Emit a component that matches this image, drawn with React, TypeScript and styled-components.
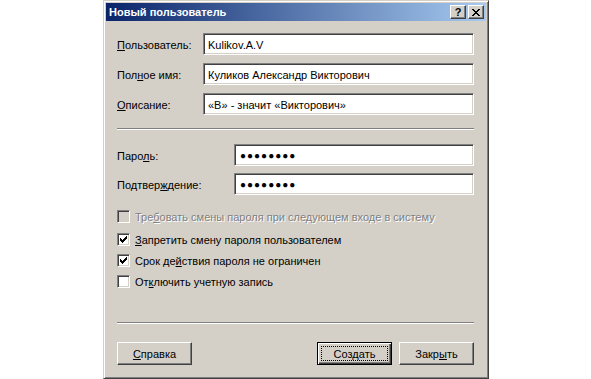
import React from 'react';
import styled, { createGlobalStyle, css } from 'styled-components';

const GlobalStyle = createGlobalStyle`
  html, body {
    margin: 0;
    padding: 0;
    background: #fff;
  }
  body {
    font-family: "Liberation Sans", Arial, sans-serif;
    font-size: 11px;
    color: #000;
  }
`;

const Page = styled.div`
  width: 591px;
  height: 379px;
  display: flex;
  padding-left: 103px;
  box-sizing: border-box;
`;

const Window = styled.div`
  width: 386px;
  height: 379px;
  box-sizing: border-box;
  background: #d4d0c8;
  border: 1px solid;
  border-color: #d4d0c8 #404040 #404040 #d4d0c8;
  box-shadow: inset 1px 1px #fff, inset -1px -1px #808080;
  padding: 2px;
  display: flex;
  flex-direction: column;
`;

const TitleBar = styled.div`
  height: 18px;
  display: flex;
  align-items: center;
  padding: 0 2px 0 3px;
  background: linear-gradient(to right, #0a246a, #a6caf0);
`;

const Title = styled.span`
  flex: 1;
  color: #fff;
  font-weight: bold;
  font-size: 11px;
`;

const CaptionButtons = styled.div`
  display: flex;
  gap: 2px;
`;

const CaptionButton = styled.div`
  width: 16px;
  height: 14px;
  box-sizing: border-box;
  background: #d4d0c8;
  border: 1px solid;
  border-color: #fff #404040 #404040 #fff;
  box-shadow: inset -1px -1px #808080;
  display: flex;
  align-items: center;
  justify-content: center;
  font-weight: bold;
  font-size: 11px;
  line-height: 1;
`;

const Body = styled.div`
  flex: 1;
  display: flex;
  flex-direction: column;
  padding: 12px 12px 0 11px;
`;

const FieldGrid = styled.div<{ $labelWidth: number; $gap: number }>`
  display: grid;
  grid-template-columns: ${p => p.$labelWidth}px 1fr;
  row-gap: ${p => p.$gap}px;
  align-items: center;
`;

const Label = styled.label`
  padding-top: 2px;
  white-space: nowrap;
`;

const Field = styled.div`
  height: 22px;
  box-sizing: border-box;
  border: 1px solid;
  border-color: #808080 #fff #fff #808080;
  box-shadow: inset 1px 1px #404040, inset -1px -1px #d4d0c8;
  background: #fff;
  padding: 1px 4px 0;
  display: flex;
  align-items: center;
  white-space: nowrap;
  overflow: hidden;
`;

const Dots = styled.span`
  font-size: 10px;
  letter-spacing: 1px;
  padding-left: 1px;
`;

const Separator = styled.div<{ $top: number; $bottom: number }>`
  margin: ${p => p.$top}px 0 ${p => p.$bottom}px;
  border-top: 1px solid #808080;
  border-bottom: 1px solid #fff;
`;

const CheckList = styled.div`
  display: flex;
  flex-direction: column;
  gap: 8px;
  margin-top: 15px;
`;

const CheckRow = styled.div<{ $disabled?: boolean }>`
  display: flex;
  align-items: center;
  gap: 5px;
  height: 13px;
  ${p =>
    p.$disabled &&
    css`
      color: #808080;
      text-shadow: 1px 1px #fff;
      margin-bottom: 2px;
    `}
`;

const Box = styled.span<{ $disabled?: boolean }>`
  width: 13px;
  height: 13px;
  box-sizing: border-box;
  border: 1px solid;
  border-color: #808080 #fff #fff #808080;
  box-shadow: inset 1px 1px #404040, inset -1px -1px #d4d0c8;
  background: ${p => (p.$disabled ? '#d4d0c8' : '#fff')};
  display: flex;
  align-items: center;
  justify-content: center;
  flex-shrink: 0;
`;

const ButtonRow = styled.div`
  display: flex;
  align-items: center;
  gap: 7px;
`;

const Spacer = styled.div`
  flex: 1;
`;

const Button = styled.div<{ $default?: boolean }>`
  width: 75px;
  height: 23px;
  box-sizing: border-box;
  background: #d4d0c8;
  border: 1px solid;
  border-color: #fff #404040 #404040 #fff;
  box-shadow: inset -1px -1px #808080;
  display: flex;
  padding: 3px;
  ${p =>
    p.$default &&
    css`
      border-color: #000;
      box-shadow: inset 1px 1px #fff, inset -1px -1px #404040, inset -2px -2px #808080;
    `}
`;

const ButtonFace = styled.span<{ $focused?: boolean }>`
  flex: 1;
  display: flex;
  align-items: center;
  justify-content: center;
  border: 1px dotted ${p => (p.$focused ? '#000' : 'transparent')};
`;

function Check() {
  return (
    <svg width="7" height="7" viewBox="0 0 7 7">
      <path d="M0 2h1v1h1v1h1V3h1V2h1V1h1V0h1v3h-1v1h-1v1h-1v1h-1v1H2V6H1V5H0z" fill="#000" />
    </svg>
  );
}

function CloseGlyph() {
  return (
    <svg width="8" height="7" viewBox="0 0 8 7">
      <path d="M0 0h2v1h1v1h2V1h1V0h2v1H7v1H6v1H5v1h1v1h1v1h1v1H6V6H5V5H3v1H2v1H0V6h1V5h1V4h1V3H2V2H1V1H0z" fill="#000" />
    </svg>
  );
}

function CheckItem({ checked, disabled, children }: { checked?: boolean; disabled?: boolean; children: React.ReactNode }) {
  return (
    <CheckRow $disabled={disabled}>
      <Box $disabled={disabled}>{checked && <Check />}</Box>
      <span>{children}</span>
    </CheckRow>
  );
}

export default function App() {
  return (
    <>
      <GlobalStyle />
      <Page>
        <Window>
          <TitleBar>
            <Title>Новый пользователь</Title>
            <CaptionButtons>
              <CaptionButton>?</CaptionButton>
              <CaptionButton>
                <CloseGlyph />
              </CaptionButton>
            </CaptionButtons>
          </TitleBar>
          <Body>
            <FieldGrid $labelWidth={86} $gap={8}>
              <Label>
                <u>П</u>ользователь:
              </Label>
              <Field>Kulikov.A.V</Field>
              <Label>
                Пол<u>н</u>ое имя:
              </Label>
              <Field>Куликов Александр Викторович</Field>
              <Label>
                <u>О</u>писание:
              </Label>
              <Field>«В» - значит «Викторович»</Field>
            </FieldGrid>

            <Separator $top={13} $bottom={14} />

            <FieldGrid $labelWidth={117} $gap={7}>
              <Label>
                Паро<u>л</u>ь:
              </Label>
              <Field>
                <Dots>●●●●●●●●</Dots>
              </Field>
              <Label>
                Подтвер<u>ж</u>дение:
              </Label>
              <Field>
                <Dots>●●●●●●●●</Dots>
              </Field>
            </FieldGrid>

            <CheckList>
              <CheckItem disabled>
                Тре<u>б</u>овать смены пароля при следующем входе в систему
              </CheckItem>
              <CheckItem checked>
                <u>З</u>апретить смену пароля пользователем
              </CheckItem>
              <CheckItem checked>
                Срок де<u>й</u>ствия пароля не ограничен
              </CheckItem>
              <CheckItem>
                От<u>к</u>лючить учетную запись
              </CheckItem>
            </CheckList>

            <Separator $top={34} $bottom={18} />

            <ButtonRow>
              <Button>
                <ButtonFace>
                  <span>
                    <u>С</u>правка
                  </span>
                </ButtonFace>
              </Button>
              <Spacer />
              <Button $default>
                <ButtonFace $focused>
                  <span>
                    Соз<u>д</u>ать
                  </span>
                </ButtonFace>
              </Button>
              <Button>
                <ButtonFace>
                  <span>
                    Закр<u>ы</u>ть
                  </span>
                </ButtonFace>
              </Button>
            </ButtonRow>
          </Body>
        </Window>
      </Page>
    </>
  );
}
